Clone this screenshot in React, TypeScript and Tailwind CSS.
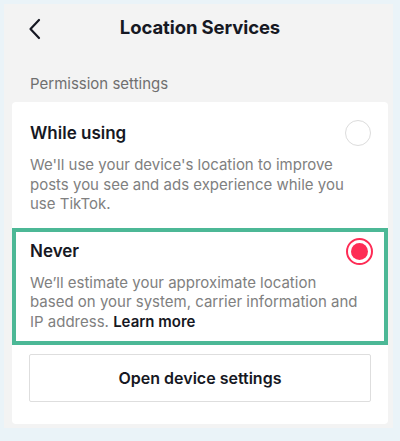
import React from "react";

function Radio({ checked }: { checked: boolean }) {
  if (checked) {
    return (
      <div className="w-[27px] h-[27px] rounded-full border-[2px] border-[#fe2c55] flex items-center justify-center shrink-0">
        <div className="w-[17px] h-[17px] rounded-full bg-[#fe2c55]" />
      </div>
    );
  }
  return <div className="w-[26px] h-[26px] rounded-full border-[1.5px] border-[#dcdcdc] shrink-0" />;
}

export default function App() {
  return (
    <div
      className="w-[400px] h-[441px] bg-[#eaf3f8] pl-[4px] pr-[7px] pt-[4px] pb-[13px]"
      style={{ fontFamily: "Inter, 'Noto Sans', sans-serif" }}
    >
      <div className="h-full bg-[#f3f3f3] pl-[8px] pr-[5px]">
        {/* Header */}
        <div className="relative h-[48px] flex items-center justify-center">
          <svg
            className="absolute left-[16px] top-[14px]"
            width="14"
            height="22"
            viewBox="0 0 14 22"
            fill="none"
          >
            <path d="M11 2 L2.5 11 L11 20" stroke="#161823" strokeWidth="2.2" strokeLinecap="round" strokeLinejoin="round" />
          </svg>
          <span className="text-[18.5px] font-bold text-[#161823] tracking-[-0.1px]">Location Services</span>
        </div>

        <div className="pl-[18px] pt-[22px] pb-[8px] text-[15px] leading-[20px] text-[#6f6f6f]">
          Permission settings
        </div>

        {/* Card */}
        <div className="bg-white rounded-[4px] flex flex-col pb-[22px]">
          <div className="pl-[18px] pr-[17px] pt-[18px]">
            <div className="flex items-center justify-between">
              <span className="text-[17px] leading-[22px] font-semibold text-[#161823]">While using</span>
              <Radio checked={false} />
            </div>
            <p className="mt-[9px] text-[15px] leading-[19.5px] text-[#808080]">
              We'll use your device's location to improve posts you see and ads experience while you use TikTok.
            </p>
          </div>

          <div className="mt-[14px] border-[4px] border-[#4cb896] pl-[14px] pr-[11px] pt-[6px] pb-[10px]">
            <div className="flex items-center justify-between">
              <span className="text-[17px] leading-[22px] font-semibold text-[#161823]">Never</span>
              <Radio checked={true} />
            </div>
            <p className="mt-[8px] pr-[14px] text-[15px] leading-[19.5px] text-[#808080]">
              We’ll estimate your approximate location based on your system, carrier information and IP address.{" "}
              <span className="font-semibold text-[#161823]">Learn more</span>
            </p>
          </div>

          <button className="mt-[9px] mx-[17px] h-[48px] border border-[#dedede] rounded-[2px] text-[16px] font-semibold text-[#161823]">
            Open device settings
          </button>
        </div>
      </div>
    </div>
  );
}
